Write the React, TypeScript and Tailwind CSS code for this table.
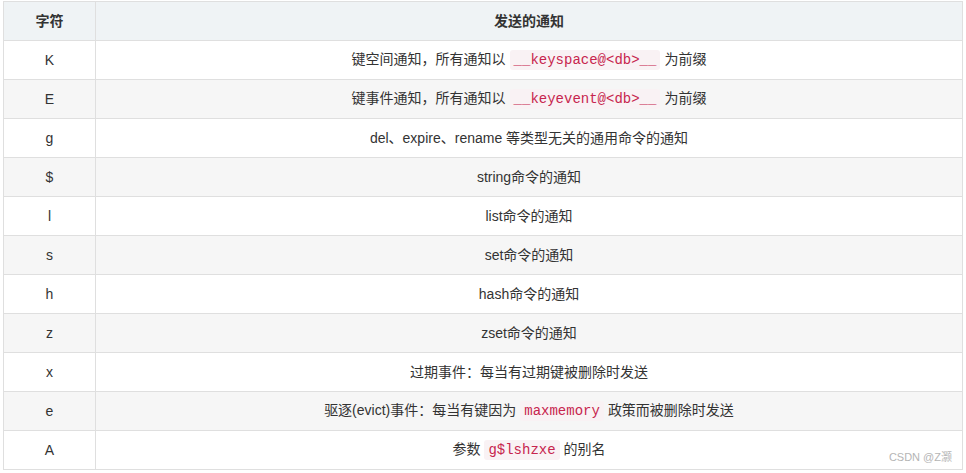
import React from "react";

type Row = { ch: string; desc: React.ReactNode };

const Code = ({ children }: { children: React.ReactNode }) => (
  <code className="mx-1 rounded-[3px] bg-[#f9f2f4] px-1 py-[2px] font-['Liberation_Mono','Noto_Sans_Mono',monospace] text-[14px] text-[#c7254e]">
    {children}
  </code>
);

const rows: Row[] = [
  {
    ch: "K",
    desc: (
      <>
        键空间通知，所有通知以<Code>__keyspace@&lt;db&gt;__</Code>为前缀
      </>
    ),
  },
  {
    ch: "E",
    desc: (
      <>
        键事件通知，所有通知以<Code>__keyevent@&lt;db&gt;__</Code>为前缀
      </>
    ),
  },
  { ch: "g", desc: "del、expire、rename 等类型无关的通用命令的通知" },
  { ch: "$", desc: "string命令的通知" },
  { ch: "l", desc: "list命令的通知" },
  { ch: "s", desc: "set命令的通知" },
  { ch: "h", desc: "hash命令的通知" },
  { ch: "z", desc: "zset命令的通知" },
  { ch: "x", desc: "过期事件：每当有过期键被删除时发送" },
  {
    ch: "e",
    desc: (
      <>
        驱逐(evict)事件：每当有键因为<Code>maxmemory</Code>政策而被删除时发送
      </>
    ),
  },
  {
    ch: "A",
    desc: (
      <>
        参数<Code>g$lshzxe</Code>的别名
      </>
    ),
  },
];

export default function App() {
  return (
    <div className="relative h-[473px] w-[966px] bg-white pl-[3px] pt-[1px] font-['Liberation_Sans','Noto_Sans_CJK_SC',sans-serif] text-[14px] text-[#333]">
      <table className="w-[960px] table-fixed border-collapse">
        <thead>
          <tr className="h-[39px] bg-[#eff3f5]">
            <th className="w-[92px] border border-[#dfdfdf] font-bold">字符</th>
            <th className="border border-[#dfdfdf] font-bold">发送的通知</th>
          </tr>
        </thead>
        <tbody>
          {rows.map((r, i) => (
            <tr key={i} className={`h-[39px] ${i % 2 === 1 ? "bg-[#f6f6f6]" : "bg-white"}`}>
              <td className="border border-[#dfdfdf] text-center">{r.ch}</td>
              <td className="border border-[#dfdfdf] text-center">{r.desc}</td>
            </tr>
          ))}
        </tbody>
      </table>
      <span className="absolute bottom-[8px] right-[14px] text-[11px] text-[#b5b5b5]">CSDN @Z灏</span>
    </div>
  );
}
